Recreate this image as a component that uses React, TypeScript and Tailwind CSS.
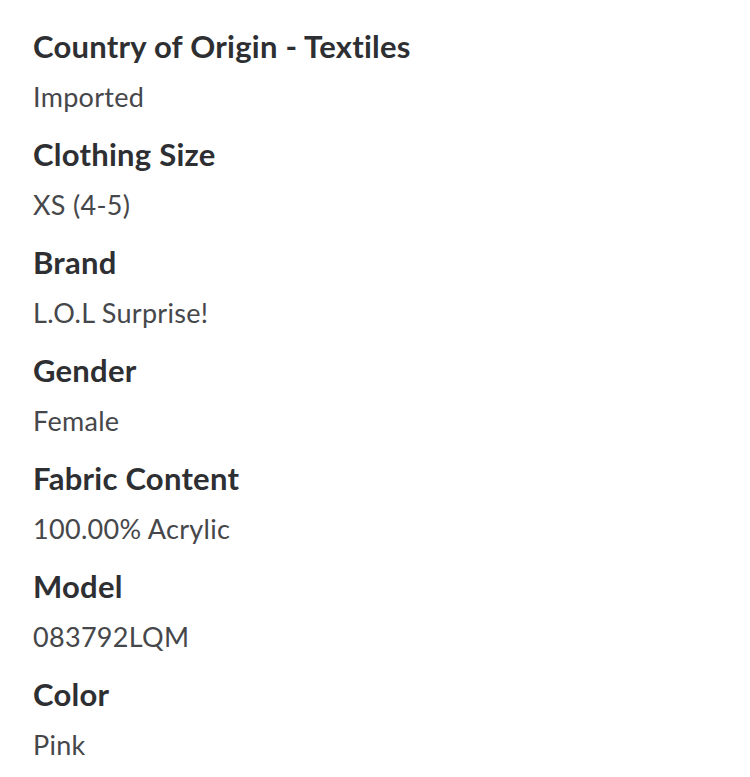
const specs = [
  { label: "Country of Origin - Textiles", value: "Imported" },
  { label: "Clothing Size", value: "XS (4-5)" },
  { label: "Brand", value: "L.O.L Surprise!" },
  { label: "Gender", value: "Female" },
  { label: "Fabric Content", value: "100.00% Acrylic" },
  { label: "Model", value: "083792LQM" },
  { label: "Color", value: "Pink" },
]

export default function App() {
  return (
    <div className="min-h-screen bg-white px-[33px] pt-[28px] font-['Lato',sans-serif]">
      <div className="flex flex-col gap-[21px]">
        {specs.map((s) => (
          <div key={s.label} className="flex flex-col gap-[15px]">
            <h3 className="text-[31px] leading-[36px] font-bold tracking-[0.25px] text-[#2e2f32]">{s.label}</h3>
            <p className="text-[27px] leading-[36px] tracking-[0.3px] text-[#46474a]">{s.value}</p>
          </div>
        ))}
      </div>
    </div>
  )
}
